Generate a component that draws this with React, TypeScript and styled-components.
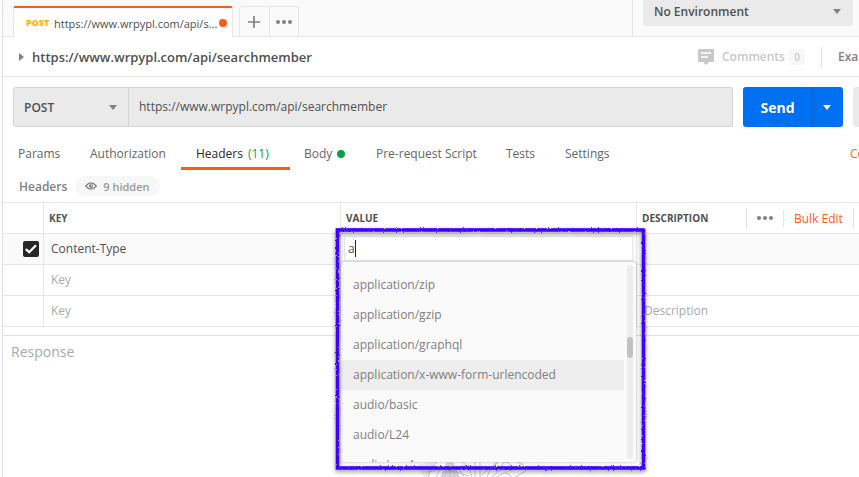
import React from 'react';
import styled, { createGlobalStyle, css } from 'styled-components';

const Global = createGlobalStyle`
  * { box-sizing: border-box; }
  body { margin: 0; background: #fff; overflow: hidden; }
`;

const Page = styled.div`
  width: 859px;
  height: 477px;
  padding-left: 2px;
  overflow: hidden;
  background: #fff;
  font-family: 'Open Sans', sans-serif;
  font-size: 12px;
  color: #505050;
  white-space: nowrap;
`;

const Window = styled.div`
  position: relative;
  height: 100%;
  border-left: 1px solid #e0e0e0;
  display: flex;
  flex-direction: column;
`;

const TopBar = styled.div`
  height: 37px;
  flex: none;
  display: flex;
  background: #fafafa;
  border-bottom: 1px solid #e6e6e6;
`;

const RequestTab = styled.div`
  margin: 6px 6px 0 10px;
  width: 220px;
  height: 31px;
  padding: 0 5px 0 12px;
  display: flex;
  align-items: center;
  background: #fff;
  border: 1px solid #e6e6e6;
  border-top: 2px solid #ff5b10;
  border-bottom: 0;
  border-radius: 2px 2px 0 0;
`;

const Verb = styled.span`
  width: 28px;
  font-size: 9px;
  font-weight: 800;
  color: #ffb400;
`;

const TabTitle = styled.span`
  font-size: 11px;
  width: 165px;
  padding-top: 1px;
`;

const Dot = styled.i<{ $color: string }>`
  display: block;
  width: 8px;
  height: 8px;
  flex: none;
  border-radius: 50%;
  background: ${p => p.$color};
`;

const TabButtons = styled.div`
  display: flex;
  margin-top: 6px;
  height: 30px;
  width: 60px;
  border: 1px solid #e6e6e6;
  border-bottom: 0;
  border-radius: 3px 3px 0 0;
`;

const TabButton = styled.div`
  flex: 1;
  display: flex;
  align-items: center;
  justify-content: center;
  & + & { border-left: 1px solid #e6e6e6; }
`;

const EnvArea = styled.div`
  margin-left: auto;
  width: 227px;
  padding-left: 10px;
  border-left: 1px solid #e6e6e6;
`;

const EnvSelect = styled.div`
  width: 210px;
  height: 26px;
  padding: 0 12px 3px 11px;
  display: flex;
  align-items: center;
  justify-content: space-between;
  border-radius: 0 0 3px 3px;
  background: #eaeaea;
  font-weight: 600;
`;

const TitleBar = styled.div`
  height: 40px;
  flex: none;
  display: flex;
  align-items: center;
  padding-left: 16px;
  border-bottom: 1px solid #e6e6e6;
`;

const Title = styled.h1`
  margin: 0 0 0 8px;
  font-size: 13px;
  font-weight: 600;
`;

const TitleActions = styled.div`
  margin-left: auto;
  width: 161px;
  display: flex;
  align-items: center;
  font-weight: 600;
  color: #c8c8c8;
  & > * { flex: none; }
`;

const CommentsLabel = styled.span`
  margin-left: 8px;
  width: 67px;
`;

const Count = styled.span`
  width: 16px;
  height: 16px;
  border-radius: 2px;
  background: #f7f7f7;
  font-size: 10px;
  line-height: 16px;
  text-align: center;
`;

const Examples = styled.span`
  margin-left: 16px;
  height: 20px;
  padding-left: 16px;
  border-left: 1px solid #e0e0e0;
  line-height: 19px;
  color: #808080;
`;

const RequestBar = styled.div`
  display: flex;
  height: 40px;
  flex: none;
  margin: 10px 0 0 10px;
`;

const MethodSelect = styled.div`
  width: 116px;
  padding: 0 11px 0 10px;
  display: flex;
  align-items: center;
  justify-content: space-between;
  border: 1px solid #d4d4d4;
  border-radius: 3px 0 0 3px;
  background: #eaeaea;
  font-weight: 600;
`;

const UrlField = styled.div`
  width: 604px;
  padding-left: 10px;
  line-height: 37px;
  border: 1px solid #d4d4d4;
  border-left: 0;
  border-radius: 0 3px 3px 0;
  background: #eaeaea;
`;

const SendGroup = styled.div`
  margin-left: 10px;
  width: 100px;
  display: flex;
  border-radius: 3px;
  background: #0070f3;
  color: #fff;
`;

const SendLabel = styled.div`
  width: 70px;
  border-right: 1px solid #0561cc;
  text-align: center;
  font-size: 14px;
  font-weight: 700;
  line-height: 41px;
`;

const SendMore = styled.div`
  flex: 1;
  display: flex;
  align-items: center;
  justify-content: center;
  padding-right: 2px;
`;

const SaveEdge = styled.div`
  margin-left: 10px;
  flex: 1;
  border-radius: 3px 0 0 3px;
  background: #eaeaea;
`;

const Tabs = styled.nav`
  display: flex;
  height: 43px;
  flex: none;
  padding: 10px 0 0 1px;
  overflow: hidden;
`;

const Tab = styled.div<{ $width: number; $active?: boolean }>`
  width: ${p => p.$width}px;
  height: 33px;
  flex: none;
  padding-left: 14px;
  display: flex;
  align-items: center;
  color: #666;
  ${p => p.$active && css`
    padding-left: 15px;
    color: #282828;
    box-shadow: inset 0 -3px #ff5b10;
  `}
`;

const HeaderCount = styled.span`
  margin-left: 5px;
  color: #0ba14b;
`;

const BodyDot = styled(Dot)`margin-left: 5px;`;

const Cookies = styled.div`
  margin-left: auto;
  width: 9px;
  line-height: 33px;
  color: #ff5b10;
`;

const SubHeader = styled.div`
  display: flex;
  align-items: center;
  height: 32px;
  flex: none;
  padding-left: 16px;
  font-weight: 600;
  color: #808080;
`;

const HiddenPill = styled.div`
  margin-left: 8px;
  width: 85px;
  height: 20px;
  padding-left: 10px;
  display: flex;
  align-items: center;
  gap: 6px;
  border-radius: 10px;
  background: #f7f7f7;
  font-size: 11px;
  color: #999;
`;

const Table = styled.div`
  flex: none;
  border-top: 1px solid #e6e6e6;
`;

const Row = styled.div<{ $filled?: boolean }>`
  display: grid;
  grid-template-columns: 41px 297px 296px 1fr;
  height: 31px;
  border-bottom: 1px solid #e6e6e6;
  background: ${p => (p.$filled ? '#fafafa' : '#fff')};
`;

const Cell = styled.div<{ $muted?: boolean; $last?: boolean }>`
  padding-left: 7px;
  line-height: 30px;
  border-right: ${p => (p.$last ? 0 : 1)}px solid #e6e6e6;
  color: ${p => (p.$muted ? '#a9a9a9' : '#505050')};
`;

const HeadCell = styled(Cell)`
  padding-left: 5px;
  font-size: 10px;
  font-weight: 700;
`;

const DescriptionHead = styled.div`
  padding-left: 5px;
  display: flex;
  align-items: center;
  font-size: 10px;
  font-weight: 700;
`;

const HeadTitle = styled.span`width: 104px;`;

const MoreCell = styled.div<{ $height: number }>`
  height: ${p => p.$height}px;
  padding-left: 10px;
  display: flex;
  align-items: center;
  border-left: 1px solid #e0e0e0;
`;

const BulkEdit = styled.div`
  margin-left: 10px;
  width: 70px;
  height: 17px;
  padding-left: 10px;
  border-left: 1px solid #e6e6e6;
  font-size: 12px;
  font-weight: 400;
  line-height: 17px;
  color: #ff5b10;
`;

const CheckCell = styled(Cell)`
  display: flex;
  align-items: center;
  padding-left: 20px;
`;

const Checkbox = styled.span`
  width: 16px;
  height: 16px;
  display: flex;
  border-radius: 2px;
  background: #282828;
`;

const Response = styled.div`
  margin-top: 8px;
  padding: 6px 8px;
  border-top: 1px solid #e0e0e0;
  font-size: 14px;
  line-height: 19px;
  color: #a9a9a9;
  flex: 1;
`;

const Backdrop = styled.svg`
  position: absolute;
  left: 412px;
  top: 457px;
`;

const Highlight = styled.div`
  position: absolute;
  left: 334px;
  top: 229px;
  width: 306px;
  height: 239px;
  padding: 7px 3px 0 4px;
`;

const Scribble = styled.svg`
  position: absolute;
  left: -4px;
  top: -4px;
  filter: drop-shadow(0 2px 2px rgba(0, 0, 0, 0.4));
`;

const ValueInput = styled.div`
  width: 289px;
  height: 25px;
  margin-left: 3px;
  padding-left: 3px;
  display: flex;
  align-items: center;
  background: #fff;
  border: 1px solid #e6e6e6;
  line-height: 22px;
`;

const Caret = styled.i`
  width: 1px;
  height: 17px;
  background: #282828;
`;

const Menu = styled.div`
  margin-top: 1px;
  width: 295px;
  height: 200px;
  padding-top: 8px;
  overflow: hidden;
  display: flex;
  border-radius: 3px;
  background: #fafafa;
  box-shadow: 0 0 3px rgba(0, 0, 0, 0.35);
`;

const Options = styled.div`
  width: 283px;
  flex: none;
`;

const Option = styled.div<{ $active?: boolean }>`
  height: 30px;
  padding-left: 12px;
  line-height: 30px;
  color: #808080;
  background: ${p => (p.$active ? '#eeeeee' : 'transparent')};
`;

const Track = styled.div`
  margin: -5px 0 0 3px;
  width: 6px;
  height: 194px;
  flex: none;
  padding-top: 72px;
  border-radius: 3px;
  background: #ededed;
`;

const Thumb = styled.div`
  height: 21px;
  border-radius: 3px;
  background: #c2c2c2;
`;

const Arrow = ({ color = '#808080' }: { color?: string }) => (
  <svg width="8" height="5" viewBox="0 0 8 5"><path d="M0 0H8L4 5Z" fill={color} /></svg>
);

const Dots = () => (
  <svg width="16" height="4" viewBox="0 0 16 4" fill="#808080">
    <circle cx="2" cy="2" r="2" /><circle cx="8" cy="2" r="2" /><circle cx="14" cy="2" r="2" />
  </svg>
);

const options = [
  'application/zip', 'application/gzip', 'application/graphql',
  'application/x-www-form-urlencoded', 'audio/basic', 'audio/L24', 'audio/mp4',
];

export default function App() {
  return (
    <Page>
      <Global />
      <Window>
        <TopBar>
          <RequestTab>
            <Verb>POST</Verb>
            <TabTitle>https://www.wrpypl.com/api/s...</TabTitle>
            <Dot $color="#ff5b10" />
          </RequestTab>
          <TabButtons>
            <TabButton>
              <svg width="12" height="12" viewBox="0 0 12 12"><path d="M6 0V12M0 6H12" stroke="#808080" strokeWidth="1.7" /></svg>
            </TabButton>
            <TabButton><Dots /></TabButton>
          </TabButtons>
          <EnvArea><EnvSelect>No Environment<Arrow /></EnvSelect></EnvArea>
        </TopBar>
        <TitleBar>
          <svg width="5" height="8" viewBox="0 0 5 8"><path d="M0 0L5 4L0 8Z" fill="#808080" /></svg>
          <Title>https://www.wrpypl.com/api/searchmember</Title>
          <TitleActions>
            <svg width="16" height="16" viewBox="0 0 16 16">
              <path d="M1 0H15Q16 0 16 1V12Q16 13 15 13H11L8 16L5 13H1Q0 13 0 12V1Q0 0 1 0Z" fill="#c8c8c8" />
              <path d="M3 4H13M3 8H10" stroke="#fff" strokeWidth="1.6" />
            </svg>
            <CommentsLabel>Comments</CommentsLabel>
            <Count>0</Count>
            <Examples>Examples</Examples>
          </TitleActions>
        </TitleBar>
        <RequestBar>
          <MethodSelect>POST<Arrow /></MethodSelect>
          <UrlField>https://www.wrpypl.com/api/searchmember</UrlField>
          <SendGroup>
            <SendLabel>Send</SendLabel>
            <SendMore><Arrow color="#fff" /></SendMore>
          </SendGroup>
          <SaveEdge />
        </RequestBar>
        <Tabs>
          <Tab $width={72}>Params</Tab>
          <Tab $width={105}>Authorization</Tab>
          <Tab $width={109} $active>Headers<HeaderCount>(11)</HeaderCount></Tab>
          <Tab $width={72}>Body<BodyDot $color="#0ba14b" /></Tab>
          <Tab $width={130}>Pre-request Script</Tab>
          <Tab $width={59}>Tests</Tab>
          <Tab $width={80}>Settings</Tab>
          <Cookies>Cookies</Cookies>
        </Tabs>
        <SubHeader>
          Headers
          <HiddenPill>
            <svg width="12" height="8" viewBox="0 0 12 8">
              <path d="M.7 4Q6-2.4 11.3 4Q6 10.4 .7 4Z" fill="none" stroke="#808080" strokeWidth="1.2" />
              <circle cx="6" cy="4" r="2" fill="#808080" />
              <circle cx="6.5" cy="3.3" r=".7" fill="#f7f7f7" />
            </svg>
            9 hidden
          </HiddenPill>
        </SubHeader>
        <Table>
          <Row>
            <HeadCell />
            <HeadCell>KEY</HeadCell>
            <HeadCell>VALUE</HeadCell>
            <DescriptionHead>
              <HeadTitle>DESCRIPTION</HeadTitle>
              <MoreCell $height={21}><Dots /></MoreCell>
              <BulkEdit>Bulk Edit</BulkEdit>
              <MoreCell $height={20} />
            </DescriptionHead>
          </Row>
          <Row $filled>
            <CheckCell>
              <Checkbox>
                <svg width="16" height="16" viewBox="0 0 16 16"><path d="M2.8 8.2L6.2 11.2L13 4.2" fill="none" stroke="#fff" strokeWidth="2.3" /></svg>
              </Checkbox>
            </CheckCell>
            <Cell>Content-Type</Cell>
            <Cell />
            <Cell $last />
          </Row>
          <Row><Cell /><Cell $muted>Key</Cell><Cell /><Cell $last /></Row>
          <Row><Cell /><Cell $muted>Key</Cell><Cell /><Cell $last $muted>Description</Cell></Row>
        </Table>
        <Response>Response</Response>
        <Backdrop width="120" height="20" viewBox="0 0 120 20" fill="none" stroke="#cccccc">
          <path d="M2 8L22 3L14 20H9Z" fill="#f0f0f0" stroke="none" />
          <circle cx="35" cy="23" r="22" />
          <circle cx="35" cy="23" r="14" />
          <path d="M26 20L32 6H38L44 20ZM29 20L34 8M35 20V8M40 20L37 8" fill="#dedede" />
          <path d="M12 15L54 8M16 8L54 19M60 0V20M65 0V20M66 18L85 4" />
          <path d="M72 20Q78 0 94 3Q112 6 111 14L100 20" />
          <circle cx="91" cy="9" r="4" />
          <path d="M77 20L87 11M94 14L108 7M82 20Q90 12 97 20" />
        </Backdrop>
        <Highlight>
          <ValueInput>a<Caret /></ValueInput>
          <Menu>
            <Options>
              {options.map((o, i) => <Option key={o} $active={i === 3}>{o}</Option>)}
            </Options>
            <Track><Thumb /></Track>
          </Menu>
          <Scribble width="316" height="250" viewBox="0 0 316 250" fill="none">
            <defs>
              <filter id="rough" x="-5%" y="-5%" width="110%" height="110%">
                <feTurbulence type="fractalNoise" baseFrequency="0.6" numOctaves="2" seed="4" />
                <feDisplacementMap in="SourceGraphic" scale="2.4" />
              </filter>
            </defs>
            <g filter="url(#rough)">
              <rect x="4.500" y="5" width="306" height="238" stroke="#8e70ff" strokeWidth="4" />
              <rect x="4.500" y="5" width="306" height="238" stroke="#3c00ff" strokeWidth="3.200" />
            </g>
          </Scribble>
        </Highlight>
      </Window>
    </Page>
  );
}
